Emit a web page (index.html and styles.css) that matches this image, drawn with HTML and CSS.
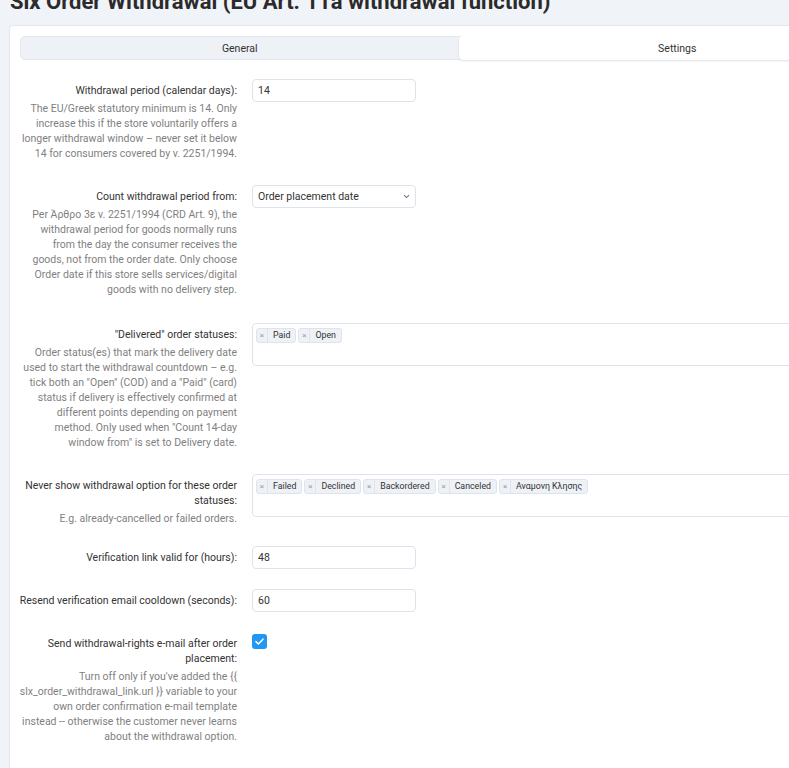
FILE: index.html
```html
<!DOCTYPE html>
<html lang="en">
<head>
<meta charset="utf-8">
<title>Slx Order Withdrawal</title>
<link rel="stylesheet" href="styles.css">
</head>
<body>
<div class="page">
  <h1 class="page-title">Slx Order Withdrawal (EU Art. 11a withdrawal function)</h1>
  <div class="card">
    <div class="tabs">
      <div class="tab">General</div>
      <div class="tab tab-active">Settings</div>
    </div>
    <div class="form">
      <div class="row">
        <div class="label-col">
          <div class="label">Withdrawal period (calendar days):</div>
          <div class="help">The EU/Greek statutory minimum is 14. Only increase this if the store voluntarily offers a longer withdrawal window – never set it below 14 for consumers covered by v. 2251/1994.</div>
        </div>
        <div class="control"><input class="input" type="text" value="14"></div>
      </div>

      <div class="row row-tall">
        <div class="label-col">
          <div class="label">Count withdrawal period from:</div>
          <div class="help">Per Άρθρο 3ε v. 2251/1994 (CRD Art. 9), the withdrawal period for goods normally runs from the day the consumer receives the goods, not from the order date. Only choose Order date if this store sells services/digital goods with no delivery step.</div>
        </div>
        <div class="control">
          <div class="select">
            <span>Order placement date</span>
            <svg class="chev" width="7" height="5" viewBox="0 0 7 5"><path d="M1 1.2 L3.5 3.6 L6 1.2" fill="none" stroke="#777" stroke-width="1.1"/></svg>
          </div>
        </div>
      </div>

      <div class="row">
        <div class="label-col">
          <div class="label">"Delivered" order statuses:</div>
          <div class="help">Order status(es) that mark the delivery date used to start the withdrawal countdown – e.g. tick both an "Open" (COD) and a "Paid" (card) status if delivery is effectively confirmed at different points depending on payment method. Only used when "Count 14-day window from" is set to Delivery date.</div>
        </div>
        <div class="control control-wide">
          <div class="tagbox">
            <span class="tag"><span class="tag-x">×</span><span class="tag-t">Paid</span></span>
            <span class="tag"><span class="tag-x">×</span><span class="tag-t">Open</span></span>
          </div>
        </div>
      </div>

      <div class="row row-short">
        <div class="label-col">
          <div class="label">Never show withdrawal option for these order statuses:</div>
          <div class="help">E.g. already-cancelled or failed orders.</div>
        </div>
        <div class="control control-wide">
          <div class="tagbox">
            <span class="tag"><span class="tag-x">×</span><span class="tag-t">Failed</span></span>
            <span class="tag"><span class="tag-x">×</span><span class="tag-t">Declined</span></span>
            <span class="tag"><span class="tag-x">×</span><span class="tag-t">Backordered</span></span>
            <span class="tag"><span class="tag-x">×</span><span class="tag-t">Canceled</span></span>
            <span class="tag"><span class="tag-x">×</span><span class="tag-t">Αναμονη Κλησης</span></span>
          </div>
        </div>
      </div>

      <div class="row">
        <div class="label-col">
          <div class="label">Verification link valid for (hours):</div>
        </div>
        <div class="control"><input class="input" type="text" value="48"></div>
      </div>

      <div class="row">
        <div class="label-col">
          <div class="label">Resend verification email cooldown (seconds):</div>
        </div>
        <div class="control"><input class="input" type="text" value="60"></div>
      </div>

      <div class="row">
        <div class="label-col">
          <div class="label">Send withdrawal-rights e-mail after order placement:</div>
          <div class="help">Turn off only if you've added the {{ slx_order_withdrawal_link.url }} variable to your own order confirmation e-mail template instead -- otherwise the customer never learns about the withdrawal option.</div>
        </div>
        <div class="control control-check">
          <span class="checkbox"><svg width="15" height="15" viewBox="0 0 15 15"><path d="M4 7.6 L6.4 10 L11 5.2" fill="none" stroke="#fff" stroke-width="1.6" stroke-linecap="round" stroke-linejoin="round"/></svg></span>
        </div>
      </div>
    </div>
  </div>
</div>
</body>
</html>
```

FILE: styles.css
```css
html, body {
  margin: 0;
  padding: 0;
  background: #f0f3f8;
  overflow: hidden;
}
body {
  font-family: Roboto, "Noto Sans", Arial, sans-serif;
  color: #333;
}
.page {
  padding-left: 9px;
  width: 898px;
}
.page-title {
  margin: -11px 0 10px 1px;
  font-size: 22px;
  line-height: 26px;
  font-weight: 700;
  color: #2b2b2b;
  white-space: nowrap;
}
.card {
  background: #fff;
  border: 1px solid #e2e7ef;
  border-radius: 4px;
  padding: 10px;
  min-height: 760px;
}
.tabs {
  display: flex;
  height: 24px;
  background: #eef1f6;
  border: 1px solid #e3e8f0;
  border-radius: 5px;
  box-sizing: border-box;
}
.tab {
  flex: 1;
  display: flex;
  align-items: center;
  justify-content: center;
  font-size: 10.5px;
  color: #333;
  border-radius: 4px;
}
.tab-active {
  background: #fff;
  box-shadow: 0 1px 2px rgba(40, 60, 90, 0.15);
  margin: -1px -1px -1px 0;
}
.form {
  margin-top: 19px;
  margin-left: -1px;
  font-size: 10.5px;
  line-height: 15px;
}
.row {
  display: flex;
  gap: 15px;
  margin-bottom: 20px;
}
.label-col {
  width: 218px;
  flex: none;
  text-align: right;
  padding-top: 4px;
}
.label {
  color: #333;
}
.help {
  color: #7f7f7f;
  margin-top: 3px;
  padding-bottom: 4px;
}
.row-tall .help {
  padding-bottom: 6px;
}
.row-short .help {
  padding-bottom: 0;
}
.control {
  flex: none;
}
.control-wide {
  flex: 1;
}
.control-check {
  padding-top: 2px;
}
.input, .select {
  box-sizing: border-box;
  width: 164px;
  height: 23px;
  border: 1px solid #dde3ec;
  border-radius: 4px;
  background: #fff;
  padding: 0 5px;
  font: inherit;
  font-size: 10.5px;
  color: #333;
  outline: none;
  display: block;
}
.select {
  display: flex;
  align-items: center;
  justify-content: space-between;
  padding-right: 5px;
}
.chev {
  display: block;
}
.tagbox {
  box-sizing: border-box;
  height: 43px;
  border: 1px solid #dde3ec;
  border-radius: 4px;
  padding: 4px 3px;
  display: flex;
  flex-wrap: wrap;
  align-content: flex-start;
  gap: 2px;
}
.tag {
  display: inline-flex;
  align-items: stretch;
  height: 15px;
  box-sizing: border-box;
  border: 1px solid #dfe4ec;
  background: #eef1f6;
  border-radius: 3px;
  font-size: 8.8px;
  line-height: 13px;
  color: #333;
}
.tag-x {
  width: 10px;
  text-align: center;
  color: #9a9a9a;
  font-size: 8px;
  border-right: 1px solid #dfe4ec;
}
.tag-t {
  padding: 0 5px;
}
.checkbox {
  display: block;
  width: 15px;
  height: 15px;
  background: #2196f3;
  border-radius: 3px;
}
.checkbox svg {
  display: block;
}
```
